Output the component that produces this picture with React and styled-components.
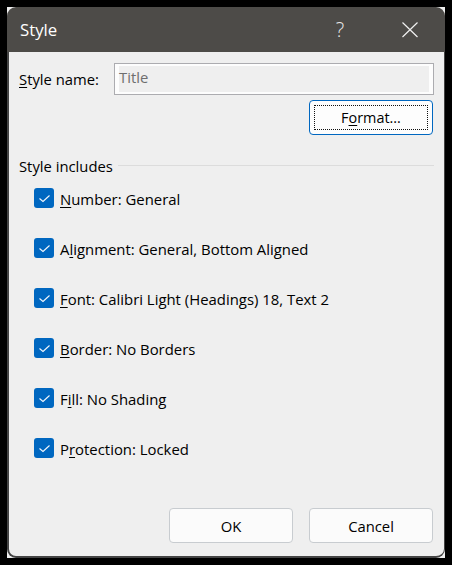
import React from 'react';
import styled, { createGlobalStyle } from 'styled-components';

const GlobalStyle = createGlobalStyle`
  html, body {
    margin: 0;
    height: 100%;
    background: #000;
  }
`;

const Page = styled.div`
  width: 452px;
  height: 565px;
  box-sizing: border-box;
  padding: 7px;
  background: #000;
  font-family: 'Open Sans', 'Noto Sans', sans-serif;
  font-size: 14.8px;
  color: #000;
`;

const Dialog = styled.div`
  width: 438px;
  height: 551px;
  box-sizing: border-box;
  background: #efefef;
  display: flex;
  flex-direction: column;
`;

const TitleBar = styled.div`
  height: 45px;
  flex: none;
  display: flex;
  align-items: center;
  padding-left: 13px;
  background: #4d4b48;
  color: #fff;
  font-size: 16.8px;
  border-radius: 9px 9px 0 0;
`;

const TitleText = styled.span`
  flex: 1;
`;

const TitleButton = styled.button`
  width: 70px;
  height: 45px;
  padding: 0;
  border: 0;
  background: none;
  color: #e8e8e8;
  font: inherit;
  font-size: 20px;
  font-weight: 300;
  display: flex;
  align-items: center;
  justify-content: center;
`;

const Body = styled.div`
  flex: 1;
  display: flex;
  flex-direction: column;
  padding: 11px 10px 13px 10px;
  border: solid #444;
  border-width: 0 1px 2px 2px;
  border-radius: 0 0 9px 9px;
`;

const NameRow = styled.div`
  display: flex;
  align-items: center;
  height: 32px;
`;

const Label = styled.label`
  width: 95px;
`;

const NameInput = styled.div`
  width: 320px;
  height: 32px;
  box-sizing: border-box;
  border: 1px solid #acacb0;
  background: #efefef;
  box-shadow: inset 4px 2px 0 #fdfdfd, inset -4px -2px 0 #fdfdfd;
  padding: 0 4px;
  color: #6e6e6e;
  line-height: 27px;
`;

const FormatRow = styled.div`
  display: flex;
  justify-content: flex-end;
  margin-top: 5px;
  padding-right: 1px;
`;

const DefaultButton = styled.button`
  width: 124px;
  height: 35px;
  box-sizing: border-box;
  border: 1px solid #0067c0;
  border-radius: 4px;
  background: #fdfdfd;
  color: #000;
  font: inherit;
  font-size: 14.4px;
  padding: 4px;
`;

const FocusRing = styled.span`
  display: flex;
  height: 100%;
  box-sizing: border-box;
  padding-bottom: 1px;
  align-items: center;
  justify-content: center;
  border: 1px dotted #111;
`;

const GroupHeading = styled.div`
  display: flex;
  align-items: center;
  gap: 5px;
  margin-top: 21px;
  height: 20px;
  &::after {
    content: '';
    flex: 1;
    height: 1px;
    margin-bottom: 2px;
    background: #dcdcdc;
  }
`;

const Options = styled.div`
  display: flex;
  flex-direction: column;
  gap: 30px;
  margin-top: 12px;
  padding-left: 15px;
`;

const Option = styled.div`
  display: flex;
  align-items: center;
  gap: 6px;
  height: 20px;
`;

const OptionText = styled.span`
  padding-top: 2px;
  font-size: 14.9px;
`;

const Check = styled.span`
  width: 20px;
  height: 20px;
  border-radius: 3px;
  background: #0067c0;
  display: flex;
  align-items: center;
  justify-content: center;
`;

const Footer = styled.div`
  margin-top: auto;
  display: flex;
  justify-content: flex-end;
  gap: 16px;
  padding-right: 1px;
`;

const FooterButton = styled.button`
  width: 124px;
  height: 35px;
  box-sizing: border-box;
  border: 1px solid #c8ccd0;
  border-radius: 4px;
  background: #fbfbfb;
  color: #000;
  font: inherit;
`;

const Key = styled.span`
  text-decoration: underline;
  text-underline-offset: 2px;
`;

const options = [
  ['', 'N', 'umber: General'],
  ['A', 'l', 'ignment: General, Bottom Aligned'],
  ['', 'F', 'ont: Calibri Light (Headings) 18, Text 2'],
  ['', 'B', 'order: No Borders'],
  ['F', 'i', 'll: No Shading'],
  ['P', 'r', 'otection: Locked'],
];

export default function App() {
  return (
    <Page>
      <GlobalStyle />
      <Dialog>
        <TitleBar>
          <TitleText>Style</TitleText>
          <TitleButton>?</TitleButton>
          <TitleButton>
            <svg width="16" height="16" viewBox="0 0 16 16">
              <path d="M0.5 0.5L15.5 15M15.5 0.5L0.5 15" stroke="#f0f0f0" strokeWidth="1.2" fill="none" />
            </svg>
          </TitleButton>
        </TitleBar>
        <Body>
          <NameRow>
            <Label><Key>S</Key>tyle name:</Label>
            <NameInput>Title</NameInput>
          </NameRow>
          <FormatRow>
            <DefaultButton>
              <FocusRing><span>F<Key>o</Key>rmat...</span></FocusRing>
            </DefaultButton>
          </FormatRow>
          <GroupHeading>Style includes</GroupHeading>
          <Options>
            {options.map(([before, key, after]) => (
              <Option key={after}>
                <Check>
                  <svg width="12" height="12" viewBox="0 0 12 12">
                    <path d="M1.5 6.5L5 9.5L11.5 3.5" stroke="#f4f8fc" strokeWidth="1.1" fill="none" />
                  </svg>
                </Check>
                <OptionText>{before}<Key>{key}</Key>{after}</OptionText>
              </Option>
            ))}
          </Options>
          <Footer>
            <FooterButton>OK</FooterButton>
            <FooterButton>Cancel</FooterButton>
          </Footer>
        </Body>
      </Dialog>
    </Page>
  );
}
